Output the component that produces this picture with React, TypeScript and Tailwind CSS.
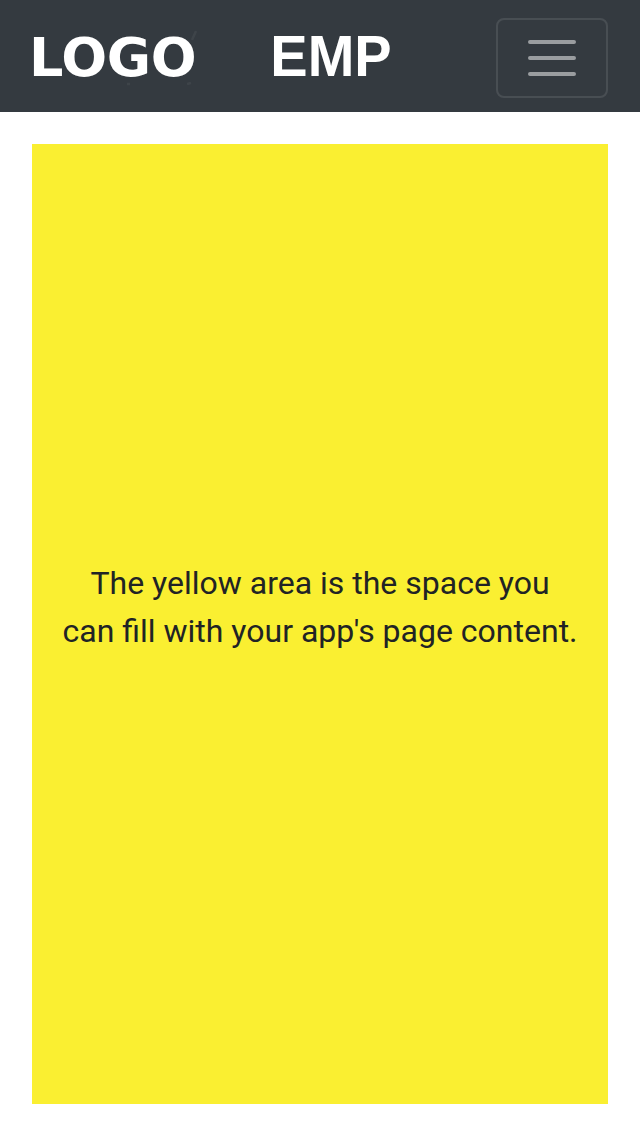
export default function App() {
  return (
    <div className="flex h-[1136px] w-[640px] flex-col bg-white">
      <header className="flex h-28 shrink-0 items-center justify-between bg-[#343a40] px-8 pt-1">
        <div className="relative -ml-[3px] w-[167px] whitespace-nowrap font-['DejaVu_Sans',sans-serif] text-[54px] font-bold leading-[80px] tracking-[-0.3px] text-white">
          <span className="block">LOGO</span>
          <svg className="absolute left-[91px] top-[10px] h-[62px] w-[80px]" viewBox="0 0 80 62" fill="none" aria-hidden="true">
            <path d="M76 3L72 12M7 56h3M67 56l4-1" stroke="white" strokeOpacity=".05" strokeWidth="2.5" />
          </svg>
        </div>
        <h1 className="mr-[30px] -mt-0.5 origin-[50%_60px] scale-y-[1.04] whitespace-nowrap font-['Liberation_Sans',sans-serif] text-[56px] font-bold leading-[80px] text-white">EMP</h1>
        <button aria-label="Toggle navigation" className="flex h-20 w-28 items-center justify-center rounded-lg border-2 border-white/10">
          <svg className="h-[60px] w-[60px]" viewBox="0 0 30 30" fill="none">
            <path d="M4 7h22M4 15h22M4 23h22" stroke="rgba(255,255,255,.5)" strokeWidth="2" strokeLinecap="round" strokeMiterlimit="10" />
          </svg>
        </button>
      </header>
      <main className="mx-8 mt-8 flex h-[960px] items-center justify-center bg-[#faef31] pb-[34px] text-center font-[Roboto,sans-serif] text-[32px] leading-[48px] text-[#212325]">
        <p>The yellow area is the space you<br />can fill with your app's page content.</p>
      </main>
    </div>
  );
}
